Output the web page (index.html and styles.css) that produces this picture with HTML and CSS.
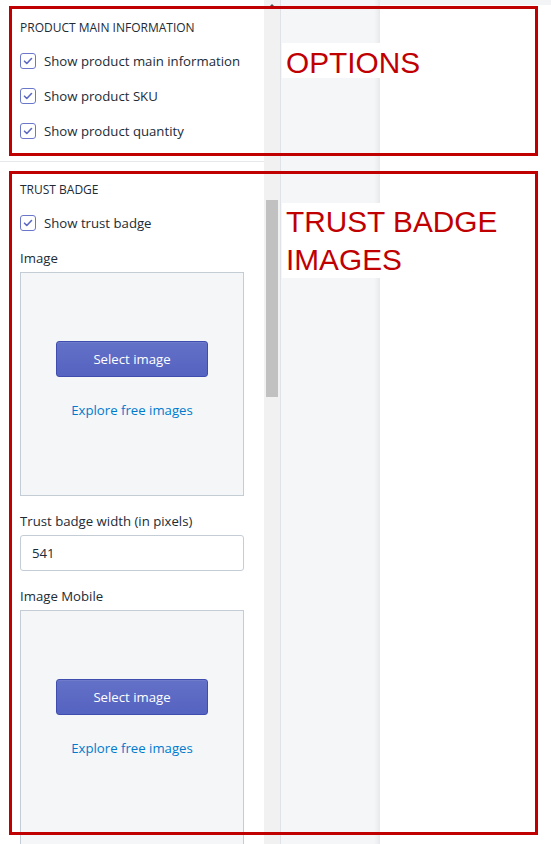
FILE: index.html
```html
<!DOCTYPE html>
<html lang="en">
<head>
<meta charset="utf-8">
<title>Product settings</title>
<link rel="stylesheet" href="styles.css">
</head>
<body>
<div class="app">
  <aside class="sidebar">
    <section class="section">
      <h2 class="subheading">PRODUCT MAIN INFORMATION</h2>
      <label class="check-row"><span class="checkbox"><svg viewBox="0 0 16 16" width="16" height="16"><path d="M4.5 8.2l2.3 2.3 4.7-5" fill="none" stroke="#5c6ac4" stroke-width="1.6" stroke-linecap="round" stroke-linejoin="round"/></svg></span><span>Show product main information</span></label>
      <label class="check-row"><span class="checkbox"><svg viewBox="0 0 16 16" width="16" height="16"><path d="M4.5 8.2l2.3 2.3 4.7-5" fill="none" stroke="#5c6ac4" stroke-width="1.6" stroke-linecap="round" stroke-linejoin="round"/></svg></span><span>Show product SKU</span></label>
      <label class="check-row"><span class="checkbox"><svg viewBox="0 0 16 16" width="16" height="16"><path d="M4.5 8.2l2.3 2.3 4.7-5" fill="none" stroke="#5c6ac4" stroke-width="1.6" stroke-linecap="round" stroke-linejoin="round"/></svg></span><span>Show product quantity</span></label>
    </section>
    <section class="section section-divided">
      <h2 class="subheading">TRUST BADGE</h2>
      <label class="check-row"><span class="checkbox"><svg viewBox="0 0 16 16" width="16" height="16"><path d="M4.5 8.2l2.3 2.3 4.7-5" fill="none" stroke="#5c6ac4" stroke-width="1.6" stroke-linecap="round" stroke-linejoin="round"/></svg></span><span>Show trust badge</span></label>
      <div class="field">
        <div class="field-label">Image</div>
        <div class="dropzone">
          <button class="btn-primary" type="button">Select image</button>
          <a class="link" href="#">Explore free images</a>
        </div>
      </div>
      <div class="field">
        <div class="field-label">Trust badge width (in pixels)</div>
        <div class="input">541</div>
      </div>
      <div class="field">
        <div class="field-label">Image Mobile</div>
        <div class="dropzone dropzone-tall">
          <button class="btn-primary" type="button">Select image</button>
          <a class="link" href="#">Explore free images</a>
        </div>
      </div>
    </section>
  </aside>
  <div class="scrollbar">
    <span class="scroll-arrow"></span>
    <span class="scroll-thumb"></span>
  </div>
  <div class="gutter"></div>
  <div class="preview"><div class="preview-top"></div></div>
</div>

<div class="annot annot-options"></div>
<div class="annot-label annot-label-options">OPTIONS</div>
<div class="annot annot-badge"></div>
<div class="annot-label annot-label-badge">TRUST BADGE<br>IMAGES</div>
</body>
</html>
```

FILE: styles.css
```css
* { box-sizing: border-box; }
html, body { margin: 0; padding: 0; }
body {
  width: 551px;
  height: 844px;
  overflow: hidden;
  position: relative;
  background: #fff;
  font-family: "Open Sans", "Noto Sans", sans-serif;
  color: #212b36;
}
.app {
  display: flex;
  height: 844px;
}
.sidebar {
  width: 264px;
  flex: none;
  background: #fff;
  overflow: hidden;
}
.section {
  display: flex;
  flex-direction: column;
  gap: 15px;
  padding: 20px 20px 20px 20px;
}
.section-divided {
  border-top: 1px solid #e6e9ec;
}
.subheading {
  margin: 0;
  font-size: 12px;
  line-height: 16px;
  font-weight: 400;
  color: #212b36;
}
.check-row {
  display: flex;
  align-items: center;
  gap: 8px;
  height: 20px;
  font-size: 13.2px;
  line-height: 20px;
  white-space: nowrap;
  color: #212b36;
}
.checkbox {
  width: 16px;
  height: 16px;
  flex: none;
  border: 1px solid #6b77c9;
  border-radius: 3px;
  background: #fff;
  display: flex;
}
.checkbox svg { margin: -1px; }
.field {
  display: flex;
  flex-direction: column;
  gap: 4px;
}
.field-label {
  font-size: 13.2px;
  line-height: 20px;
  white-space: nowrap;
  color: #212b36;
}
.dropzone {
  height: 224px;
  border: 1px solid #c4cdd5;
  background: #f4f6f8;
  display: flex;
  flex-direction: column;
  align-items: center;
  padding-top: 68px;
  gap: 23px;
}
.dropzone-tall { height: 260px; }
.btn-primary {
  width: 152px;
  height: 36px;
  border: 1px solid #3f4eae;
  border-radius: 3px;
  background: linear-gradient(#6371c7, #5563c1);
  box-shadow: inset 0 1px 0 0 #6f7bcb;
  color: #fff;
  font-family: inherit;
  font-size: 13.2px;
  line-height: 20px;
  padding: 0;
}
.link {
  color: #007ace;
  text-decoration: none;
  font-size: 13.2px;
  line-height: 20px;
}
.input {
  height: 36px;
  border: 1px solid #c4cdd5;
  border-radius: 3px;
  background: #fff;
  padding: 0 11px;
  font-size: 13.2px;
  line-height: 34px;
  color: #212b36;
}
.scrollbar {
  width: 16px;
  flex: none;
  background: #f1f1f1;
  display: flex;
  flex-direction: column;
  align-items: center;
}
.scroll-arrow {
  margin-top: 4px;
  width: 0;
  height: 0;
  border-left: 3px solid transparent;
  border-right: 3px solid transparent;
  border-bottom: 3px solid #505050;
}
.scroll-thumb {
  margin-top: 193px;
  width: 12px;
  height: 197px;
  background: #c1c1c1;
}
.gutter {
  width: 100px;
  flex: none;
  border-left: 1px solid #dfe3e8;
  background: linear-gradient(to right, #f4f6f8 0, #f4f6f8 93px, #eef0f2 96px, #e6e8eb 99px);
}
.preview {
  flex: 1;
  background: #fff;
}
.preview-top {
  height: 5px;
  background: #f3f4f6;
}
.annot {
  position: absolute;
  left: 9px;
  width: 529px;
  border: 3px solid #c00000;
}
.annot-options { top: 6px; height: 150px; }
.annot-badge { top: 171px; height: 664px; }
.annot-label {
  position: absolute;
  left: 282px;
  width: 98px;
  background: #fff;
  color: #c00000;
  font-family: "Liberation Sans", Arial, sans-serif;
  font-size: 29.8px;
  white-space: nowrap;
  padding-left: 4px;
}
.annot-label-options {
  top: 43px;
  line-height: 30px;
  padding-top: 5px;
}
.annot-label-badge {
  top: 203px;
  line-height: 37.5px;
  padding-top: 0;
}
```
